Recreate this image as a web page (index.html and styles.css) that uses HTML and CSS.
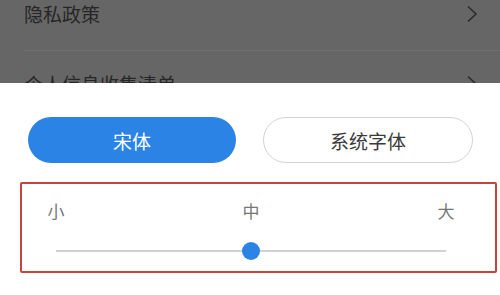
FILE: index.html
```html
<!DOCTYPE html>
<html lang="zh-CN">
<head>
<meta charset="utf-8">
<link rel="stylesheet" href="styles.css">
</head>
<body>
<div class="backdrop">
  <div class="row first">
    <span class="row-title">隐私政策</span>
    <svg class="chev" width="14" height="18" viewBox="0 0 14 18"><polyline points="3,1.5 11,9 3,16.5" fill="none" stroke="#2b2b2b" stroke-width="1.6"/></svg>
  </div>
  <div class="row second">
    <span class="row-title">个人信息收集清单</span>
    <svg class="chev" width="14" height="18" viewBox="0 0 14 18"><polyline points="3,1.5 11,9 3,16.5" fill="none" stroke="#2b2b2b" stroke-width="1.6"/></svg>
  </div>
</div>
<div class="sheet">
  <div class="fonts">
    <div class="btn btn-on">宋体</div>
    <div class="btn btn-off">系统字体</div>
  </div>
  <div class="size-box">
    <div class="labels">
      <span class="lbl">小</span>
      <span class="lbl">中</span>
      <span class="lbl">大</span>
    </div>
    <div class="track">
      <div class="knob"></div>
    </div>
  </div>
</div>
</body>
</html>
```

FILE: styles.css
```css
html, body {
  margin: 0;
  padding: 0;
}
body {
  width: 500px;
  height: 295px;
  overflow: hidden;
  background: #ffffff;
  font-family: "Noto Sans CJK SC", "Noto Sans", sans-serif;
}
.backdrop {
  height: 83px;
  overflow: hidden;
  background: #666666;
  padding: 0 0 0 24px;
}
.row {
  display: flex;
  align-items: center;
  justify-content: space-between;
  padding-right: 21px;
  height: 28px;
}
.row.first {
  padding-bottom: 22px;
  border-bottom: 1px solid #6f6f6f;
}
.row.second {
  padding-top: 19px;
}
.row-title {
  font-size: 19px;
  line-height: 28px;
  color: #262626;
}
.chev {
  display: block;
}
.sheet {
  padding-top: 34px;
}
.fonts {
  display: flex;
  gap: 27px;
  padding: 0 27px 0 28px;
}
.btn {
  flex: 1;
  height: 46px;
  box-sizing: border-box;
  border-radius: 23px;
  display: flex;
  align-items: center;
  justify-content: center;
  font-size: 19px;
}
.btn-on {
  background: #2a83e5;
  color: #ffffff;
}
.btn-off {
  background: #ffffff;
  border: 1px solid #d3d3d3;
  color: #3a3a3a;
}
.size-box {
  margin: 19px 3px 0 20px;
  border: 2px solid #c8433d;
  border-radius: 2px;
  padding: 15px 49px 11px 34px;
}
.labels {
  display: flex;
  justify-content: space-between;
  margin: 0 -10px;
}
.lbl {
  width: 20px;
  text-align: center;
  font-size: 17px;
  line-height: 24px;
  color: #777777;
}
.track {
  position: relative;
  height: 18px;
  margin-top: 19px;
}
.track::before {
  content: "";
  position: absolute;
  left: 0;
  right: 0;
  top: 8px;
  height: 2px;
  background: #d2d2d2;
}
.knob {
  position: absolute;
  left: 50%;
  top: 0;
  width: 18px;
  height: 18px;
  margin-left: -9px;
  border-radius: 50%;
  background: #2a83e5;
}
```
